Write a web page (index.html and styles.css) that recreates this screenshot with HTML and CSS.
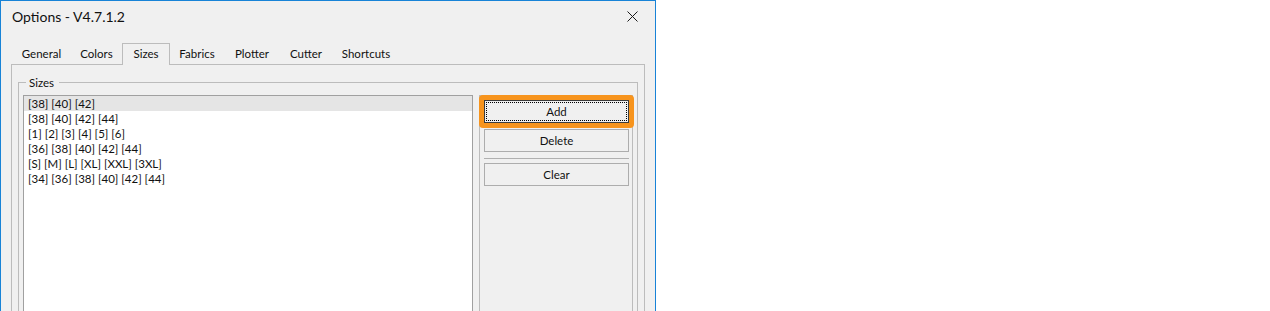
FILE: index.html
```html
<!DOCTYPE html>
<html>
<head>
<meta charset="utf-8">
<link rel="stylesheet" href="styles.css">
</head>
<body>
<div class="window">
  <div class="titlebar">
    <span class="title">Options - V4.7.1.2</span>
    <svg class="close" width="11" height="11" viewBox="0 0 11 11"><path d="M0.5 0.5 L10.5 10.5 M10.5 0.5 L0.5 10.5" stroke="#1a1a1a" stroke-width="1" fill="none"/></svg>
  </div>
  <div class="tabs">
    <div class="tab w-general">General</div>
    <div class="tab w-colors">Colors</div>
    <div class="tab sel w-sizes">Sizes</div>
    <div class="tab w-fabrics">Fabrics</div>
    <div class="tab w-plotter">Plotter</div>
    <div class="tab w-cutter">Cutter</div>
    <div class="tab w-shortcuts">Shortcuts</div>
  </div>
  <div class="panel">
    <div class="group">
      <div class="group-label">Sizes</div>
      <div class="group-body">
        <div class="listbox">
          <div class="item selected">[38] [40] [42]</div>
          <div class="item">[38] [40] [42] [44]</div>
          <div class="item">[1] [2] [3] [4] [5] [6]</div>
          <div class="item">[36] [38] [40] [42] [44]</div>
          <div class="item">[S] [M] [L] [XL] [XXL] [3XL]</div>
          <div class="item">[34] [36] [38] [40] [42] [44]</div>
        </div>
        <div class="side">
          <div class="focus-ring"><button class="btn default"><span class="focus">Add</span></button></div>
          <button class="btn delete">Delete</button>
          <div class="sep"></div>
          <button class="btn">Clear</button>
        </div>
      </div>
    </div>
  </div>
</div>
</body>
</html>
```

FILE: styles.css
```css
html, body {
  margin: 0;
  padding: 0;
  background: #ffffff;
  overflow: hidden;
}
.window {
  width: 654px;
  height: 420px;
  border: 1px solid #1883d7;
  border-bottom: 0;
  background: #f0f0f0;
  font-family: "Lato", "Liberation Sans", sans-serif;
  font-size: 11.5px;
  color: #111;
}
.titlebar {
  height: 30px;
  display: flex;
  align-items: center;
  justify-content: space-between;
  padding: 0 17px 0 11px;
}
.title {
  font-size: 14px;
  color: #111;
}
.close {
  display: block;
}
.tabs {
  margin-top: 12px;
  height: 21px;
  display: flex;
  align-items: flex-end;
  padding-left: 11px;
}
.tab {
  height: 21px;
  line-height: 21px;
  text-align: center;
  box-sizing: border-box;
  white-space: nowrap;
}
.tab.sel {
  height: 22px;
  line-height: 20px;
  border: 1px solid #bcbcbc;
  border-bottom: 0;
  margin-bottom: -1px;
  position: relative;
  z-index: 1;
  background: #f0f0f0;
}
.w-general { width: 59px; }
.w-colors { width: 51px; }
.w-sizes { width: 48px; }
.w-fabrics { width: 54px; }
.w-plotter { width: 56px; }
.w-cutter { width: 52px; }
.w-shortcuts { width: 68px; }
.panel {
  margin: 0 10px;
  border: 1px solid #bcbcbc;
  border-bottom: 0;
  height: 400px;
  padding: 17px 6px 0 6px;
}
.group {
  border: 1px solid #bcbcbc;
  border-bottom: 0;
  height: 380px;
  padding: 0 4px;
}
.group-label {
  margin: -8px 0 0 3px;
  padding: 0 5px 0 3px;
  width: fit-content;
  line-height: 15px;
  background: #f0f0f0;
}
.group-body {
  margin-top: 5px;
  display: flex;
  gap: 6px;
  align-items: flex-start;
}
.listbox {
  width: 448px;
  height: 360px;
  border: 1px solid #a0a0a0;
  background: #ffffff;
}
.item {
  height: 15px;
  line-height: 15px;
  padding-left: 4px;
  white-space: nowrap;
}
.item.selected {
  background: #e5e5e5;
}
.side {
  width: 145px;
  height: 360px;
  border: 1px solid #bcbcbc;
  padding: 4px 3px 0 4px;
  display: flex;
  flex-direction: column;
}
.focus-ring {
  margin: -5px -5px 0 -5px;
  border: 5px solid #f7941d;
  border-radius: 4px;
}
.btn {
  display: block;
  width: 145px;
  height: 23px;
  margin: 0;
  padding: 0;
  border: 1px solid #adadad;
  background: #f0f0f0;
  font-family: inherit;
  font-size: 11.5px;
  color: #111;
  line-height: 21px;
  text-align: center;
}
.btn.default {
  border-color: #3c3c3c;
  padding: 1px;
}
.btn .focus {
  display: block;
  height: 17px;
  line-height: 17px;
  border: 1px dotted #000;
}
.btn.delete {
  margin-top: 1px;
}
.sep {
  height: 1px;
  background: #b0b0b0;
  margin: 6px 0 4px 0;
}
```
